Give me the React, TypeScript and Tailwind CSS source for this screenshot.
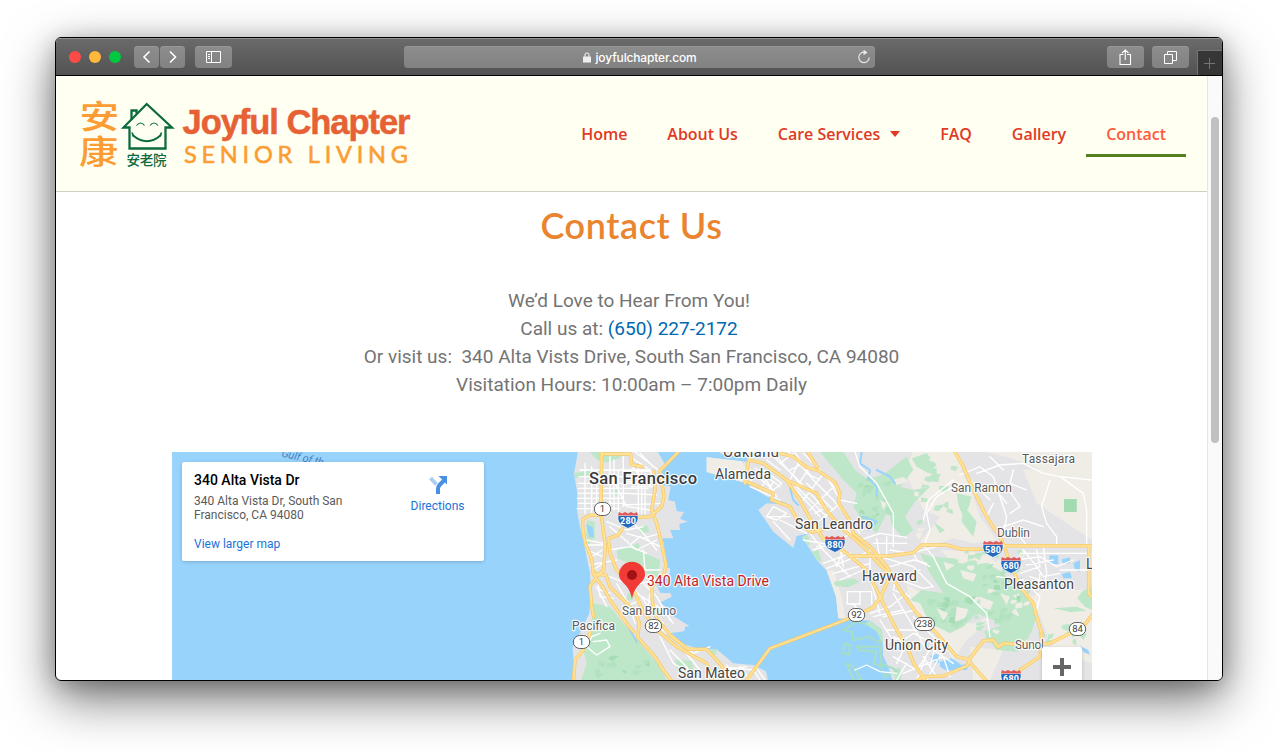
import React from "react";

type Pt = [number, number];

const WATER = "#98d3fc";
const URBAN = "#e4e4e6";
const LAND = "#f0ede6";
const PARK = "#bde7c8";
const FOREST = "#a2dbb2";

/* Map geometry is written in thirds of a pixel, with its origin at the pin layer's corner. */
const peninsula =
  "M55 0L42 70L52 130L52 190L62 240L76 300L90 370L92 420L88 490L62 545L38 590L42 650L34 700H626L618 664L580 645L520 640L470 598L420 597L370 583L330 550L372 544L376 530L388 528L335 495L318 470L300 458L335 440L332 430L300 428L290 402L300 385L330 370L330 355L318 352L318 320L308 265L340 265L330 240L360 240L358 222L383 215L360 206L372 186L350 184L345 155L325 150L332 110L305 105L300 70L316 44L290 0Z";
const eastBay =
  "M470 0H1600V700H1000L985 650L968 615L966 540L930 512L870 510L835 505L828 440L815 400L800 362L770 330L742 285L725 262L752 248L690 168L650 160L560 100L440 66L440 22L545 34L560 20L490 16Z";

const parks = [
  "M90 6L190 6L180 24L140 38L112 30Z",
  "M44 68L120 60L122 70L60 80L44 86Z",
  "M82 210L104 215L104 265L85 285L78 250Z",
  "M170 300L235 280L245 305L300 330L295 385L262 372L215 345L172 325Z",
  "M235 230L262 226L268 245L240 250Z",
  "M160 118L178 122L172 138L158 134Z",
  "M205 430L222 430L218 450L196 452Z",
  "M100 460L150 470L190 520L225 560L300 650L325 700H60L80 640L70 600L92 545Z",
  "M345 630L395 632L402 670L352 660Z",
  "M455 595L472 598L466 615L446 612Z",
  "M780 6H850L885 60L925 90L975 70L1040 20L1060 60L1020 110L1060 120L1110 110L1065 155L1035 200L1060 240L1030 265L995 225L985 180L950 250L905 210L880 170L890 130L850 90Z",
  "M1055 25L1100 10L1130 45L1105 70L1070 50Z",
  "M1190 130L1235 140L1225 175L1205 190L1195 165Z",
  "M1210 165L1250 215L1240 260L1205 215Z",
  "M1120 320L1180 325L1230 340L1300 350L1370 400L1400 430L1430 500L1415 545L1400 570L1350 550L1300 510L1250 490L1210 530L1170 550L1110 520L1080 460L1050 450L1085 420L1150 430L1110 370L1080 310Z",
  "M1270 545L1340 520L1400 575L1370 605L1310 600Z",
  "M1512 147H1550V186H1512Z",
  "M1565 425L1596 410V480L1575 470L1552 445Z",
  "M1480 475L1550 470L1580 482L1530 486Z",
  "M725 262L745 256L750 285L735 290Z",
  "M755 305L775 300L785 335L765 330Z",
  "M822 395L880 385L900 395L865 412L825 408Z",
  "M1120 215L1155 240L1140 250Z",
  "M1000 660L1020 650L1025 690L1005 690Z",
];
const naturals = [
  "M1060 0H1180L1230 110L1260 200L1310 270L1240 280L1180 265L1110 290L1080 275L1140 200L1090 180L1060 120L1035 65Z",
  "M1390 60L1596 40V270L1520 220L1430 160Z",
  "M1140 300L1240 305L1290 320L1330 360L1280 350L1180 340Z",
  "M1040 400L1100 440L1190 520L1280 520L1220 570L1180 630L1130 560L1050 470Z",
  "M1390 420L1596 420V640L1480 600L1440 500Z",
  "M440 22L545 34L560 60L560 100L440 66Z",
  "M800 362L828 440L835 505L855 505L845 440L820 360Z",
  "M1230 590L1330 600L1290 690H1240Z",
  "M1250 0H1600V50L1450 60L1340 20Z",
];
const suburbs = [
  "M1200 60L1290 50L1330 140L1400 190L1500 200L1510 280H1340L1290 200Z",
  "M1360 290H1596V400L1500 380L1420 440L1370 400Z",
];
const clearings = [
  "M1190 470L1225 478L1215 505L1185 515Z",
  "M1260 440L1300 455L1290 480L1262 470Z",
  "M1150 335L1185 345L1160 362Z",
  "M1200 360L1250 372L1240 395L1210 385Z",
  "M1320 430L1350 440L1340 465Z",
  "M1130 475L1165 490L1150 512Z",
  "M1000 90L1030 80L1045 95L1010 105Z",
  "M960 150L980 160L970 180Z",
];
const ponds = [
  "M848 512L930 512L966 540L972 690H860L850 600Z",
];
const pondBanks = [
  "M850 540L890 515L940 530L962 548L960 580L930 560L880 570L875 545Z",
  "M852 580L870 585L868 615L850 610Z",
  "M890 590L960 590L965 650L940 640L950 605L900 600Z",
  "M860 640L880 650L905 690H880Z",
  "M960 640L1000 655L1010 665L975 680Z",
];

const creeks = [
  "M905 6L900 40L930 60L925 85L950 110L950 135",
  "M950 60L990 80L1005 100",
  "M905 200L950 215L925 240",
  "M205 530L230 575",
  "M690 115L700 150L715 165",
];
const lakes = [
  "M78 222L98 232L102 260L88 262Z",
  "M1468 316H1495V342H1468Z",
  "M1505 328L1530 322L1530 340L1508 342Z",
  "M1505 372L1530 365L1536 385L1510 385Z",
  "M1540 340L1560 330V365L1545 360Z",
  "M1140 635L1175 625L1205 645L1230 640L1220 660L1160 662L1140 650Z",
  "M1560 588L1585 600L1590 615L1570 605Z",
  "M1110 618L1135 610L1138 640L1120 635Z",
];

const highways = [
  "M125 0L123 190L131 250L136 290L131 360L112 378",
  "M125 12H212L215 44L248 50",
  "M355 6L300 62L312 140L305 170L270 200L205 205",
  "M282 65L285 120L275 180L290 220L305 280L318 345L312 370L275 410L278 460L290 505L330 555L385 598H440L465 625L495 660L505 700",
  "M118 196L90 196L68 208L68 235L76 280L95 325L100 370L108 385L90 408L95 470L101 500",
  "M188 235L175 255L145 265L150 310L170 360L200 390L225 430L250 485L290 540L350 590L440 640L462 700",
  "M108 385L128 410L150 450L200 520L220 545",
  "M108 372L138 376L150 410L190 450L228 490L238 520L233 562L285 620L310 660L340 700",
  "M92 545L70 600L45 630L40 700",
  "M560 690L630 595L830 520L860 508L940 472L962 440L985 390",
  "M555 100L566 30L610 40L680 90L720 150L760 225L790 265L860 310L920 360L960 440L1010 540L1042 592L1062 642L1102 700",
  "M660 10L700 20L740 52L775 62L825 97L840 130L835 158L868 210L880 250L930 290L980 350L1020 420L1070 490L1130 550L1190 620L1225 628",
  "M740 0L772 52",
  "M680 90L770 130L795 175L840 230L910 290L960 345L992 375",
  "M560 95L640 130L635 150L690 170L715 215L755 247L790 238",
  "M870 318H985L1060 308L1085 285H1160L1205 298H1270L1340 287H1600",
  "M1182 0L1210 50L1240 120L1280 200L1325 270L1355 350L1380 410L1420 460L1430 500L1445 550L1440 620L1380 660L1340 700",
  "M1586 287V430L1600 445",
  "M1600 490L1570 530L1520 555L1470 580L1420 585L1330 580L1315 592L1300 570L1270 572L1225 632L1250 660L1285 700",
  "M1060 700L1090 680L1150 678L1220 648L1230 632",
];

const streets = [
  "M60 60H270M58 80H260M55 100H270M55 115H265M55 130H200M52 145H190M55 160H190M52 176H180M75 40V190M95 50V190M110 60V190M150 20V190M162 30V180M175 60V185M190 20V170M235 50V190M245 60V190M255 70V190M215 50L275 110M200 130L290 135M190 165L310 160M140 215L200 240L250 230M150 230L230 300L290 270M200 250L250 265L300 250M210 20L270 60L290 100M160 90L200 170L270 180M205 60L275 65M205 80L275 85M200 95H275M215 110H280M240 10L280 50M225 6L295 60",
  "M80 270L130 280M80 285H130M80 300L130 320M90 345L170 330M95 320L128 300M98 360L130 340M115 400L120 440L160 445M150 380L200 400L245 440L270 480L310 520M190 360L250 380L310 400M240 400L300 385M250 300L255 360L300 360M230 430L310 480L340 520M270 430L260 500L320 550M170 400L210 470L225 520M150 300L210 290L260 310M210 210L250 250L290 300M250 400L290 440L330 510M120 420L150 430M110 410L140 470M200 470L240 450M300 290L240 260L215 280",
  "M80 590L110 615L150 590L140 570L100 575M75 600L95 560L120 550M330 550L400 610L450 590M300 560L340 640L420 690M370 600L420 660M480 650L580 660L600 690M470 630L520 690M490 660L560 650M330 600L380 650L400 690M540 650L570 690M590 655L615 690M500 645L540 690",
  "M570 60L640 120L665 100L610 60M585 70L570 95M600 60L650 140M570 110L660 150M585 55L660 110M620 85L600 120M640 95L625 125M620 200L640 170L680 190L650 210ZM640 215L690 270M620 200L690 200M660 210L740 250",
  "M640 20L700 75L760 140L830 220M700 0L760 90L820 150L900 250M720 30L690 90M750 50L710 110M790 70L730 150M820 110L750 180M840 160L770 220M800 80L840 150L890 160M710 110L800 200M650 20L720 100M680 0L770 100M730 10L800 80M660 40L700 10M620 30L660 60M740 100L820 180M780 60L840 130M690 60L730 40M740 70L780 90M765 190L800 170M700 110L780 200M850 230L900 270L960 250L1040 262M750 250L790 300L870 380M770 290L880 250M790 340L870 310M820 370L930 340M760 300L850 270M800 355L890 320M840 390L910 360M850 300L830 350M730 270L840 290L850 350M880 330L930 300L930 360",
  "M885 6L900 50L950 100L1000 190V290M960 320L1060 350L1120 410L1090 415L1020 390M990 300L1050 310L1130 290M1060 308L1070 330L1110 350M1090 290L1110 240L1100 190L1130 140L1180 110M990 350L1060 330L1100 340M1010 370L1000 420L1050 440M1000 390L1080 360M940 280H1040M950 265L960 330M980 260V320",
  "M862 425H900V462H862ZM900 425H935V462M880 462L910 500M935 400L960 490M930 490L990 470L1040 430M940 500L1030 480M970 500L1070 480M980 540L1080 540M1000 430L1060 530L1100 600M990 600L1060 550L1160 600M1000 620L1070 660L1110 600M1030 670L1150 620L1170 680M1000 560L1040 580L1010 640M1060 500L1130 570L1110 650M1120 600L1180 640M960 510L1010 590M975 580L1030 560M1090 620L1130 680M1110 590L1070 690M1040 640L1010 690M1150 600L1100 690",
  "M1085 280L1120 320L1160 400L1230 440L1280 490L1290 560M1200 75L1260 50L1300 80L1320 140L1340 200L1330 260M1250 70L1320 45L1390 40L1450 70L1500 80L1596 90M1280 120L1340 110L1380 170L1350 190M1300 160L1280 200M1360 60L1350 100L1400 120M1470 90L1445 170L1460 220L1490 260V285M1330 230L1390 210L1450 230M1360 240L1400 285M1500 80L1570 130L1580 180V280M1090 210L1105 150L1180 90M1290 20L1330 60M1230 90L1290 150M1300 110L1340 160",
  "M1370 330L1440 320L1490 350L1540 330M1390 300L1430 350L1450 380L1500 370M1380 370L1440 350L1430 300M1400 400L1440 440L1430 480M1440 370L1435 420M1450 290L1460 370L1450 420M1500 360L1586 360M1310 380L1390 390M1380 310H1580M1400 345L1480 330M1410 380L1470 400",
];

/* Small deterministic vegetation patches scattered over the hills. */
function patches(seed: number, count: number, x0: number, y0: number, w: number, h: number): string[] {
  let s = seed;
  const next = () => {
    s = (s * 16807) % 2147483647;
    return s / 2147483647;
  };
  return Array.from({ length: count }, () => {
    const x = x0 + next() * w;
    const y = y0 + next() * h;
    const pts: Pt[] = [
      [x, y],
      [x + 8 + next() * 22, y - 6 + next() * 12],
      [x + 6 + next() * 16, y + 8 + next() * 14],
      [x - 6 + next() * 8, y + 8 + next() * 8],
    ];
    return "M" + pts.map((p) => p[0].toFixed(0) + " " + p[1].toFixed(0)).join("L") + "Z";
  });
}

const lightPatches = [
  ...patches(4177, 18, 1060, 20, 130, 240),
  ...patches(77123, 30, 1190, 290, 200, 70),
  ...patches(91877, 28, 1210, 400, 200, 170),
  ...patches(15331, 12, 1420, 500, 150, 70),
];
const darkPatches = [
  ...patches(70123, 12, 105, 610, 150, 60),
  ...patches(23011, 16, 880, 80, 110, 120),
  ...patches(57991, 26, 1100, 440, 120, 80),
  ...patches(63441, 20, 1250, 340, 140, 170),
];

function MapLabel({ x, y, size, w, children, color = "#454545", weight = 400 }: {
  x: number; y: number; size: number; w: number; children: string; color?: string; weight?: number;
}) {
  return (
    <text x={x} y={y} fontSize={size} textLength={w} fill={color} fontWeight={weight} stroke="#fff" strokeWidth={2.4} strokeOpacity={0.85} strokeLinejoin="round" paintOrder="stroke">
      {children}
    </text>
  );
}

function Interstate({ x, y, n }: { x: number; y: number; n: string }) {
  return (
    <g transform={`translate(${x} ${y})`}>
      <path d="M-10 -4.500Q-11 2 -6.500 5Q-3 7 0 8.500Q3 7 6.500 5Q11 2 10 -4.500Z" fill="#2369bd" stroke="#fff" strokeWidth=".8" />
      <path d="M-10 -4.500L-9 -8L-6 -6.500L-3 -8L0 -6.500L3 -8L6 -6.500L9 -8L10 -4.500Z" fill="#e05a5a" />
      <text y="4" textAnchor="middle" fontSize="9" fontWeight="700" fill="#fff" textLength="16">{n}</text>
    </g>
  );
}

function StateRoute({ x, y, n }: { x: number; y: number; n: string }) {
  const w = n.length === 3 ? 20 : 16.4;
  return (
    <g transform={`translate(${x} ${y})`}>
      <rect x={-w / 2} y="-6.500" width={w} height="13" rx="6.500" fill="#fff" stroke="#606060" strokeWidth="1" />
      <text y="3.400" textAnchor="middle" fontSize="9.500" fill="#3c3c3c">{n}</text>
    </g>
  );
}

function MapDrawing() {
  return (
    <svg viewBox="172 452 920 228" className="block h-[228px] w-[920px]" fontFamily="Roboto, sans-serif">
      <rect x="172" y="452" width="920" height="228" fill={WATER} />
      <g transform="translate(560 450) scale(.33333)" fill="none" strokeLinejoin="round" strokeLinecap="round">
        <clipPath id="land"><path d={peninsula} /><path d={eastBay} /></clipPath>
        <path d={peninsula} fill={URBAN} />
        <path d={eastBay} fill={URBAN} />
        <path d="M480 17L560 22L562 36L545 34Z" fill={WATER} />
        <path d="M566 120L600 140L640 168L700 185L680 160Z" fill={WATER} />
        <path d="M595 180L620 160L690 165L755 248L710 258L700 294L640 245Z" fill={URBAN} />
        {naturals.map((d) => <path key={d} d={d} fill={LAND} />)}
        {suburbs.map((d) => <path key={d} d={d} fill={URBAN} />)}
        <g clipPath="url(#land)">
          {parks.map((d) => <path key={d} d={d} fill={PARK} />)}
          {lightPatches.map((d, i) => <path key={i} d={d} fill={i % 3 ? PARK : LAND} />)}
          {darkPatches.map((d, i) => <path key={i} d={d} fill={i % 4 === 0 ? "#a6dcb4" : "#b3e2c0"} />)}
          {clearings.map((d) => <path key={d} d={d} fill={LAND} />)}
        </g>
        <path d="M1512 147H1550V186H1512Z" fill={FOREST} />
        {ponds.map((d) => <path key={d} d={d} fill={WATER} />)}
        {pondBanks.map((d) => <path key={d} d={d} stroke="#a6dfc4" strokeWidth="6" />)}
        <path d="M930 512L966 540L968 580L950 545L915 520Z" fill={PARK} />
        {lakes.map((d) => <path key={d} d={d} fill={WATER} />)}
        <g stroke={WATER} strokeWidth="6">{creeks.map((d) => <path key={d} d={d} />)}</g>
        <g stroke="#fff" strokeWidth="4">
          {streets.map((d) => <path key={d} d={d} />)}
          <path d="M885 660L920 645L960 665L1010 670" />
        </g>
        <g stroke="#f8c96a" strokeWidth="10.500">{highways.map((d) => <path key={d} d={d} />)}</g>
        <g stroke="#ffe296" strokeWidth="6">{highways.map((d) => <path key={d} d={d} />)}</g>
      </g>

      <text x="281" y="456.500" fontSize="11" fontStyle="italic" fill="#4a7fc0" transform="rotate(13 281 456)" textLength="43">Gulf of th</text>
      <MapLabel x={589} y={484} size={16.5} w={108} weight={500} color="#3a3a3a">San Francisco</MapLabel>
      <MapLabel x={723} y={457} size={14.5} w={56}>Oakland</MapLabel>
      <MapLabel x={715} y={479} size={14} w={56}>Alameda</MapLabel>
      <MapLabel x={795} y={529} size={14} w={78}>San Leandro</MapLabel>
      <MapLabel x={862} y={581} size={14} w={55}>Hayward</MapLabel>
      <MapLabel x={885} y={650} size={14} w={63}>Union City</MapLabel>
      <MapLabel x={678} y={678} size={14} w={67}>San Mateo</MapLabel>
      <MapLabel x={622} y={615} size={12} w={54} color="#5a5a5a">San Bruno</MapLabel>
      <MapLabel x={572} y={630} size={12} w={43} color="#5a5a5a">Pacifica</MapLabel>
      <MapLabel x={1022} y={463} size={12} w={53} color="#5a5a5a">Tassajara</MapLabel>
      <MapLabel x={951} y={492} size={12} w={61} color="#5a5a5a">San Ramon</MapLabel>
      <MapLabel x={997} y={537} size={12} w={33} color="#5a5a5a">Dublin</MapLabel>
      <MapLabel x={1004} y={589} size={14} w={70}>Pleasanton</MapLabel>
      <MapLabel x={1015} y={649} size={12} w={29} color="#5a5a5a">Sunol</MapLabel>
      <MapLabel x={1086} y={569} size={14} w={8}>L</MapLabel>
      <StateRoute x={602.5} y={509} n="1" />
      <StateRoute x={581.5} y={642} n="1" />
      <StateRoute x={653.5} y={626} n="82" />
      <StateRoute x={856.5} y={615} n="92" />
      <StateRoute x={924.5} y={624} n="238" />
      <StateRoute x={1077.5} y={629} n="84" />
      <Interstate x={628} y={520} n="280" />
      <Interstate x={835} y={544} n="880" />
      <Interstate x={993} y={549} n="580" />
      <Interstate x={1011} y={565} n="680" />
      <Interstate x={1011} y={678} n="680" />

      <path d="M632 599C630.800 593 629.500 589.500 625 584.500C621.500 581 619 578.500 619 574.500A13 12.700 0 0 1 645 574.500C645 578.500 642.500 581 639 584.500C634.500 589.500 633.200 593 632 599Z" fill="#f03b36" />
      <circle cx="632" cy="575" r="5" fill="#a41216" />
      <MapLabel x={647} y={586} size={14} w={122} color="#c5221f">340 Alta Vista Drive</MapLabel>
    </svg>
  );
}

function Logo() {
  return (
    <svg viewBox="78 96 334 74" className="h-[74px] w-[334px] self-center overflow-visible">
      <g fontFamily="'Noto Sans CJK TC', sans-serif" fill="#fc9d33" fontSize="39" fontWeight="500">
        <text transform="translate(79.500 127) scale(1.02 .82)">安</text>
        <text transform="translate(79 162.500) scale(1.01 .85)">康</text>
      </g>
      <g fill="none" stroke="#0b6b3f" strokeWidth="2.300" strokeLinejoin="miter">
        <path d="M129.500 126.500H123.500L146.700 103L172 126.500H165.500V147.500H129.500Z" />
        <path d="M131.500 119V109.500H136.500V112.500" />
        <path d="M132.500 134Q147 146.500 161 134" strokeWidth="1.900" />
        <path d="M132 131.500L133.500 135.500M161.500 131.500L160 135.500" strokeWidth="1.700" />
        <path d="M136.500 124.500Q140.500 119.500 144.500 124.500M150 124.500Q154 119.500 158 124.500" strokeWidth="1.200" />
      </g>
      <text x="126.500" y="164" fontSize="13.500" fontWeight="500" textLength="40" fill="#0b6b3f" fontFamily="'Noto Sans CJK TC', sans-serif">安老院</text>
      <text x="182.500" y="133" fontSize="34.500" fontWeight="700" textLength="228" fill="#e66235" stroke="#e66235" strokeWidth=".5" fontFamily="'Liberation Sans', Arial, sans-serif">Joyful Chapter</text>
      <text x="184" y="161.800" fontSize="23.500" fontWeight="400" textLength="224" fill="#fc9d33" stroke="#fc9d33" strokeWidth=".6" fontFamily="Lato, sans-serif">SENIOR LIVING</text>
    </svg>
  );
}

function Toolbar() {
  const button = "flex h-[22px] items-center justify-center rounded-[4px] bg-gradient-to-b from-[#8d8d8d] to-[#828282] shadow-[inset_0_1px_0_#989898]";
  return (
    <div className="flex h-[38px] shrink-0 border-b border-black bg-gradient-to-b from-[#6b6b6b] to-[#525252] shadow-[inset_0_1px_0_#929292]">
      <div className="flex flex-1 items-start pl-[13px] pt-2">
        <div className="mt-[5px] flex gap-2">
          <span className="h-3 w-3 rounded-full bg-[#ff4b48]" />
          <span className="h-3 w-3 rounded-full bg-[#ffb73c]" />
          <span className="h-3 w-3 rounded-full bg-[#00c93f]" />
        </div>
        <div className="ml-[13px] flex gap-px">
          <div className={button + " w-[25px]"}>
            <svg viewBox="0 0 12 14" className="h-[14px] w-3" fill="none" stroke="#fff" strokeWidth="1.600"><path d="M8.500 1.500L3 7L8.500 12.500" /></svg>
          </div>
          <div className={button + " w-[25px]"}>
            <svg viewBox="0 0 12 14" className="h-[14px] w-3" fill="none" stroke="#fff" strokeWidth="1.600"><path d="M3 1.500L8.500 7L3 12.500" /></svg>
          </div>
        </div>
        <div className={button + " ml-[10px] w-[37px]"}>
          <svg viewBox="0 0 15 12" className="h-3 w-[15px]" fill="none" stroke="#fff"><path d="M.5 .5H14.500V11.500H.5ZM5.500 .5V11.500M2 3.500H4M2 5.500H4M2 7.500H4" /></svg>
        </div>
        <div className={button + " relative ml-[172px] w-[471px] gap-[5px]"}>
          <svg viewBox="0 0 8 11" className="h-[11px] w-2"><path d="M2 5V3Q2 1 4 1Q6 1 6 3V5" fill="none" stroke="#eee" strokeWidth="1.100" /><rect y="4.500" width="8" height="6" rx=".6" fill="#eee" /></svg>
          <span className="mt-px w-[101px] whitespace-nowrap font-['Inter','Roboto',sans-serif] text-[12px] font-medium leading-4 tracking-[-0.15px] text-white">joyfulchapter.com</span>
          <svg viewBox="0 0 14 14" className="absolute right-[4px] top-[4px] h-[14px] w-[14px]" fill="none" stroke="#e8e8e8" strokeWidth="1.200"><path d="M7.500 2.200A5.200 5.200 0 1 0 12.200 7.500" /><path d="M6.500 -.5L10.500 2.400L6.500 5.200Z" fill="#e8e8e8" stroke="none" /></svg>
        </div>
        <div className={button + " ml-[232px] w-[37px]"}>
          <svg viewBox="0 0 13 16" className="mb-px h-4 w-[13px]" fill="none" stroke="#fff" strokeWidth="1.100"><path d="M4.500 5.500H1V15.500H11.500V5.500H8M6.250 11V1M3 4L6.250 1L9.500 4" /></svg>
        </div>
        <div className={button + " ml-2 w-[37px]"}>
          <svg viewBox="0 0 13 13" className="h-[13px] w-[13px]" fill="none" stroke="#fff"><path d="M.5 3.500H8.500V12.500H.5ZM3.500 3V.5H12.500V9.500H9" /></svg>
        </div>
      </div>
      <div className="mt-3 flex w-[25px] border-l border-t border-[#747474] bg-[#363636] pl-[6px] pt-[7px]">
        <svg viewBox="0 0 11 11" className="h-[11px] w-[11px]" stroke="#747474"><path d="M5.500 0V11M0 5.500H11" /></svg>
      </div>
    </div>
  );
}

function Header() {
  const link = "self-start whitespace-nowrap px-5 pb-[9px] pt-[11px]";
  return (
    <header className="flex h-[116px] shrink-0 items-start justify-between border-b border-[#ced0c8] bg-[#fffff2] pl-[22px] pr-[21px]">
      <Logo />
      <nav className="mt-[36px] flex font-['Open_Sans',sans-serif] text-[16px] font-semibold leading-[22px] tracking-[-0.02px] text-[#e03a26]">
        <a className={link}>Home</a>
        <a className={link}>About Us</a>
        <a className={link + " flex items-center gap-[10px]"}>
          Care Services
          <svg viewBox="0 0 10 6" className="h-[6px] w-[10px]" fill="#e03a26"><path d="M0 0H10L5 6Z" /></svg>
        </a>
        <a className={link}>FAQ</a>
        <a className={link}>Gallery</a>
        <a className={link + " border-b-[3px] border-[#55801f] text-[#ff5a3c]"}>Contact</a>
      </nav>
    </header>
  );
}

function PlaceCard() {
  return (
    <div className="absolute left-[10px] top-[10px] flex h-[99px] w-[302px] justify-between rounded-[2px] bg-white pl-3 pr-[19.5px] shadow-[0_1px_4px_-1px_rgba(0,0,0,0.3)]">
      <div className="flex w-[170px] flex-col text-[12px] leading-[14px]">
        <div className="mt-[10px] whitespace-nowrap text-[14px] font-medium leading-4 text-black">340 Alta Vista Dr</div>
        <div className="mt-[6px] whitespace-nowrap text-[#5b5b5b]">340 Alta Vista Dr, South San<br />Francisco, CA 94080</div>
        <a className="mt-[15px] text-[#1a73d8]">View larger map</a>
      </div>
      <div className="flex flex-col items-center pt-[14px] text-[12px] leading-[14px] text-[#1a73d8]">
        <svg viewBox="0 0 18 18" className="mr-[-1px] h-[18px] w-[18px]" fill="none" strokeWidth="4">
          <path d="M1.500 2L7.500 8.500" stroke="#abcdf2" />
          <path d="M9 18V13Q9 10.500 11 8.500L15 4.500" stroke="#4a90e2" />
          <path d="M9.500 0H18V8.500Z" fill="#4a90e2" />
        </svg>
        <span className="mt-[5px]">Directions</span>
      </div>
    </div>
  );
}

export default function App() {
  return (
    <div className="flex h-[754px] w-[1278px] overflow-hidden bg-white pl-[55px] pt-[37px] font-['Roboto',sans-serif]">
      <div className="flex h-[644px] w-[1168px] flex-col overflow-hidden rounded-[6px] border border-black bg-white shadow-[0_18px_50px_rgba(0,0,0,0.55),0_4px_22px_rgba(0,0,0,0.22)]">
        <Toolbar />
        <div className="flex min-h-0 flex-1">
          <main className="flex w-[1151px] flex-col overflow-hidden">
            <Header />
            <h1 className="mt-[11px] h-11 whitespace-nowrap text-center font-['Lato',sans-serif] text-[36px] font-semibold leading-[44px] tracking-[0.6px] text-[#ea842f]">Contact Us</h1>
            <div className="mt-[40px] whitespace-pre text-center text-[19px] leading-[28px] text-[#747474]">
              <p className="pr-[5px]">We’d Love to Hear From You!</p>
              <p className="pr-[5px]">Call us at: <a className="text-[#0068b3]">(650) 227-2172</a></p>
              <p>{"Or visit us:  340 Alta Vists Drive, South San Francisco, CA 94080"}</p>
              <p>Visitation Hours: 10:00am – 7:00pm Daily</p>
            </div>
            <div className="relative ml-[116px] mt-[53px] h-[229px] w-[920px] shrink-0 overflow-hidden">
              <MapDrawing />
              <PlaceCard />
              <div className="absolute left-[870px] top-[195px] flex h-10 w-10 items-center justify-center rounded-[2px] bg-white shadow-[0_1px_4px_-1px_rgba(0,0,0,0.3)]">
                <svg viewBox="0 0 18 18" className="h-[18px] w-[18px]" stroke="#666" strokeWidth="4"><path d="M9 0V18M0 9H18" /></svg>
              </div>
            </div>
          </main>
          <div className="w-[15px] border-l border-[#e6e6e6] bg-[#fafafa] pl-[3px] pt-[41px]">
            <div className="h-[326px] w-2 rounded-full bg-[#c1c1c1]" />
          </div>
        </div>
      </div>
    </div>
  );
}
